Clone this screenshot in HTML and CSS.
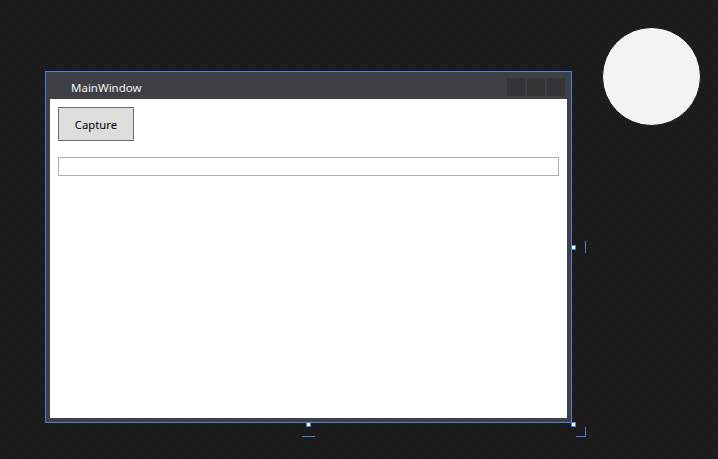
FILE: index.html
```html
<!DOCTYPE html>
<html>
<head>
<meta charset="utf-8">
<link rel="stylesheet" href="styles.css">
</head>
<body>
<div class="canvas">
  <div class="window">
    <div class="titlebar">
      <span class="title">MainWindow</span>
      <div class="caption-buttons">
        <span class="cap"></span><span class="cap"></span><span class="cap"></span>
      </div>
    </div>
    <div class="content">
      <button class="btn">Capture</button>
      <div class="textbox"></div>
    </div>
  </div>
  <div class="circle"></div>
  <span class="handle h-right"></span>
  <span class="handle h-bottom"></span>
  <span class="handle h-corner"></span>
  <span class="guide g-right"></span>
  <span class="guide g-bottom"></span>
  <span class="guide g-corner"></span>
</div>
</body>
</html>
```
FILE: styles.css
```css
*, *::before, *::after {
  box-sizing: border-box;
}
html, body {
  margin: 0;
  padding: 0;
}
body {
  width: 718px;
  height: 459px;
  overflow: hidden;
  background-color: #1b1b1b;
  background-image: conic-gradient(#1d1d1d 25%, #1a1a1a 0 50%, #1d1d1d 0 75%, #1a1a1a 0);
  background-size: 16px 16px;
  font-family: "Noto Sans", "Open Sans", sans-serif;
}
.canvas {
  position: relative;
  width: 718px;
  height: 459px;
}
.window {
  position: absolute;
  left: 45px;
  top: 71px;
  width: 527px;
  height: 352px;
  border: 1px solid #4d80d8;
  background: #3e4045;
  display: flex;
  flex-direction: column;
  padding: 0 4px 4px 4px;
}
.titlebar {
  height: 27px;
  flex: none;
  display: flex;
  align-items: flex-start;
  justify-content: space-between;
}
.title {
  color: #f4f4f4;
  font-size: 11.5px;
  margin-left: 21px;
  margin-top: 8px;
  line-height: 16px;
}
.caption-buttons {
  display: flex;
  gap: 2px;
  margin-top: 6px;
  margin-right: 2px;
}
.cap {
  width: 18px;
  height: 18px;
  background: #333438;
}
.content {
  flex: 1;
  background: #ffffff;
  padding: 8px;
  display: flex;
  flex-direction: column;
  align-items: flex-start;
  gap: 16px;
}
.btn {
  width: 76px;
  height: 34px;
  border: 1px solid #707070;
  background: #dddddd;
  color: #000;
  font-family: "Noto Sans", "Open Sans", sans-serif;
  font-size: 11.3px;
  padding: 0;
  margin: 0;
}
.textbox {
  width: 501px;
  height: 19px;
  border: 1px solid #abadb3;
  background: #fff;
}
.circle {
  position: absolute;
  left: 602px;
  top: 27px;
  width: 99px;
  height: 99px;
  border-radius: 50%;
  background: #f3f3f3;
  border: 1px solid #111;
}
.handle {
  position: absolute;
  width: 5px;
  height: 5px;
  background: #fff;
  border: 1px solid #4d80d8;
}
.h-right { left: 571px; top: 245px; }
.h-bottom { left: 306px; top: 422px; }
.h-corner { left: 571px; top: 422px; }
.guide {
  position: absolute;
  background: #4d80d8;
}
.g-right { left: 585px; top: 241px; width: 1px; height: 12px; }
.g-bottom { left: 302px; top: 436px; width: 13px; height: 1px; }
.g-corner {
  left: 576px;
  top: 427px;
  width: 10px;
  height: 10px;
  background: transparent;
  border-right: 1px solid #4d80d8;
  border-bottom: 1px solid #4d80d8;
}
```
